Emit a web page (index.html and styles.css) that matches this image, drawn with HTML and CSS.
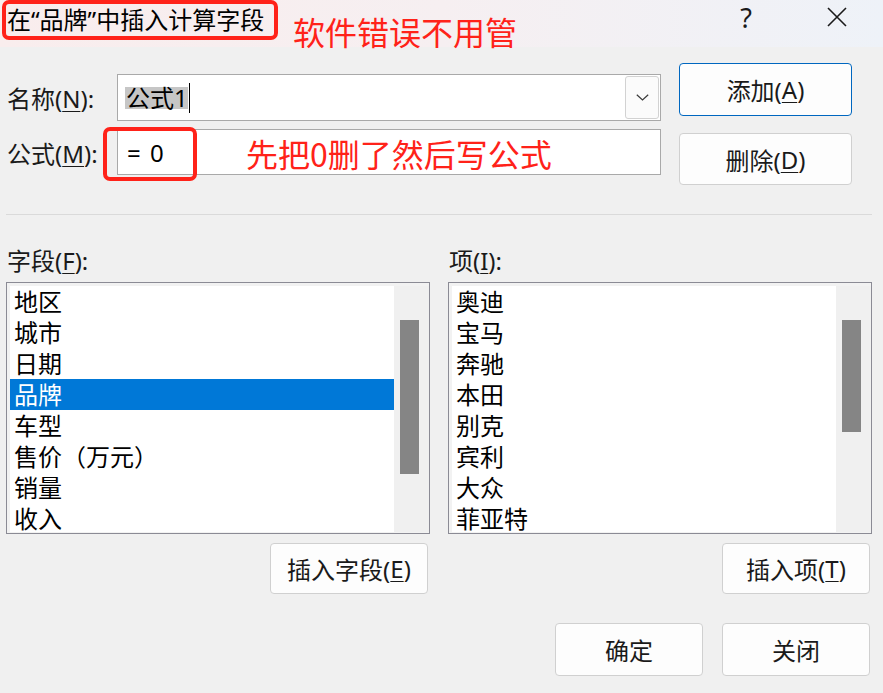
FILE: index.html
```html
<!DOCTYPE html>
<html lang="zh-CN">
<head>
<meta charset="utf-8">
<title>插入计算字段</title>
<link rel="stylesheet" href="styles.css">
</head>
<body>
<div class="window">
  <header class="titlebar">
    <div class="title">在“品牌”中插入计算字段</div>
    <div class="note note-title">软件错误不用管</div>
    <div class="tb-spacer"></div>
    <div class="tb-help">?</div>
    <div class="tb-close">
      <svg width="20" height="20" viewBox="0 0 20 20"><path d="M1 1 L19 19 M19 1 L1 19" stroke="#1a1a1a" stroke-width="1.6" fill="none"/></svg>
    </div>
  </header>

  <section class="top">
    <div class="form">
      <div class="form-row">
        <div class="lbl">名称(<u>N</u>):</div>
        <div class="input combo">
          <span class="sel">公式1</span><span class="caret"></span>
          <div class="dd">
            <svg width="13" height="7" viewBox="0 0 13 7"><polyline points="0.8,0.8 6.5,6 12.2,0.8" stroke="#3a3a3a" stroke-width="1.2" fill="none"/></svg>
          </div>
        </div>
      </div>
      <div class="form-row">
        <div class="lbl">公式(<u>M</u>):</div>
        <div class="input formula">
          <span class="val">= 0</span>
          <div class="redbox"></div>
          <div class="note note-formula">先把0删了然后写公式</div>
        </div>
      </div>
    </div>
    <div class="side">
      <div class="btn btn-add">添加(<u>A</u>)</div>
      <div class="btn btn-del">删除(<u>D</u>)</div>
    </div>
  </section>

  <div class="sep"></div>

  <section class="lists">
    <div class="col">
      <div class="col-label">字段(<u>F</u>):</div>
      <div class="listbox">
        <ul class="items">
          <li>地区</li>
          <li>城市</li>
          <li>日期</li>
          <li class="selected">品牌</li>
          <li>车型</li>
          <li>售价（万元）</li>
          <li>销量</li>
          <li>收入</li>
        </ul>
        <div class="scroll"><div class="thumb thumb-fields"></div></div>
      </div>
      <div class="col-actions"><div class="btn btn-insert-field">插入字段(<u>E</u>)</div></div>
    </div>
    <div class="col">
      <div class="col-label">项(<u>I</u>):</div>
      <div class="listbox">
        <ul class="items">
          <li>奥迪</li>
          <li>宝马</li>
          <li>奔驰</li>
          <li>本田</li>
          <li>别克</li>
          <li>宾利</li>
          <li>大众</li>
          <li>菲亚特</li>
        </ul>
        <div class="scroll"><div class="thumb thumb-items"></div></div>
      </div>
      <div class="col-actions"><div class="btn btn-insert-item">插入项(<u>T</u>)</div></div>
    </div>
  </section>

  <footer class="footer">
    <div class="btn btn-foot">确定</div>
    <div class="btn btn-foot">关闭</div>
  </footer>
</div>
</body>
</html>
```

FILE: styles.css
```css
* { box-sizing: border-box; margin: 0; padding: 0; }
html, body { width: 883px; height: 693px; overflow: hidden; }
body {
  background: #f0f0f0;
  font-family: "Noto Sans", "Noto Sans CJK SC", sans-serif;
  font-size: 24px;
  color: #1a1a1a;
}
.window { width: 883px; height: 693px; overflow: hidden; }

u {
  text-decoration: underline;
  text-decoration-thickness: 1px;
  text-underline-offset: 3px;
}

/* title bar */
.titlebar {
  height: 47px;
  display: flex;
  align-items: flex-start;
  background: linear-gradient(90deg, #f9eded 0%, #f6eff1 50%, #eef2f8 100%);
}
.title {
  margin-left: 2px;
  width: 276px;
  height: 40px;
  border: 4px solid #ff2219;
  border-radius: 7px;
  padding-left: 1px;
  line-height: 31px;
  white-space: nowrap;
  color: #000;
}
.note {
  color: #ff2219;
  font-size: 32px;
  font-family: "Noto Sans CJK SC", sans-serif;
  white-space: nowrap;
  line-height: 40px;
}
.note-title { margin-left: 15px; margin-top: 11px; }
.tb-spacer { flex: 1; }
.tb-help {
  width: 24px;
  text-align: center;
  font-size: 27px;
  line-height: 35px;
  color: #1a1a1a;
}
.tb-close { margin-left: 69px; margin-right: 36px; margin-top: 7px; height: 20px; }
.tb-close svg { display: block; }

/* top form */
.top { display: flex; padding-left: 7px; }
.form { padding-top: 27px; display: flex; flex-direction: column; gap: 8px; }
.form-row { display: flex; align-items: center; }
.lbl { width: 110px; white-space: nowrap; color: #1a1a1a; }
.input {
  width: 544px;
  background: #fff;
  border: 1px solid #a9a9a9;
  position: relative;
  display: flex;
  align-items: center;
  padding-left: 7px;
  white-space: nowrap;
}
.combo { height: 47px; }
.formula { height: 46px; }
.sel {
  display: inline-block;
  height: 22px;
  line-height: 22px;
  background: #c6c6c6;
  color: #000;
  padding: 0 0 0 1px;
}
.caret { display: inline-block; width: 1px; height: 30px; background: #000; margin-left: 1px; }
.dd {
  margin-left: auto;
  margin-right: 1px;
  width: 34px;
  height: 43px;
  border: 1px solid #d2d2d2;
  border-radius: 3px;
  background: #fbfbfb;
  display: flex;
  align-items: center;
  justify-content: center;
}
.dd svg { display: block; }
.val { color: #000; padding-left: 2px; word-spacing: 3px; }
.redbox {
  position: absolute;
  left: -15px;
  top: -3px;
  width: 94px;
  height: 54px;
  border: 4px solid #ff2219;
  border-radius: 7px;
}
.note-formula { position: absolute; left: 128px; top: 3px; }

.side {
  margin-left: 18px;
  padding-top: 16px;
  display: flex;
  flex-direction: column;
  gap: 17px;
}

/* buttons */
.btn {
  background: #fdfdfd;
  border: 1px solid #d0d0d0;
  border-radius: 4px;
  color: #1a1a1a;
  display: flex;
  align-items: center;
  justify-content: center;
  white-space: nowrap;
}
.side .btn { width: 173px; }
.btn-add { height: 53px; border-color: #0067c0; }
.btn-del { height: 52px; }

.sep { height: 1px; background: #dadada; margin: 29px 11px 0 6px; }

/* lists */
.lists {
  display: grid;
  grid-template-columns: 424px 424px;
  column-gap: 18px;
  padding: 30px 0 0 6px;
}
.col-label { height: 32px; line-height: 32px; white-space: nowrap; padding-left: 1px; }
.listbox {
  margin-top: 5px;
  height: 252px;
  border: 1px solid #8b8b95;
  background: #f2f2f2;
  display: flex;
  padding: 3px 0 1px 3px;
}
.items {
  flex: 1;
  list-style: none;
  background: #fff;
  overflow: hidden;
}
.items li {
  height: 31px;
  line-height: 31px;
  padding-left: 4px;
  white-space: nowrap;
  color: #000;
}
.items li.selected { background: #0078d7; color: #fff; }
.scroll { width: 35px; background: #f0f0f0; }
.thumb { margin-left: 6px; margin-top: 34px; width: 19px; background: #858585; }
.thumb-fields { height: 154px; }
.thumb-items { height: 112px; }

.col-actions { display: flex; justify-content: flex-end; padding-right: 2px; margin-top: 9px; }
.btn-insert-field { width: 158px; height: 51px; }
.btn-insert-item { width: 148px; height: 51px; }

.footer {
  display: flex;
  justify-content: flex-end;
  gap: 19px;
  padding-right: 13px;
  margin-top: 29px;
}
.btn-foot { width: 148px; height: 53px; }
```
